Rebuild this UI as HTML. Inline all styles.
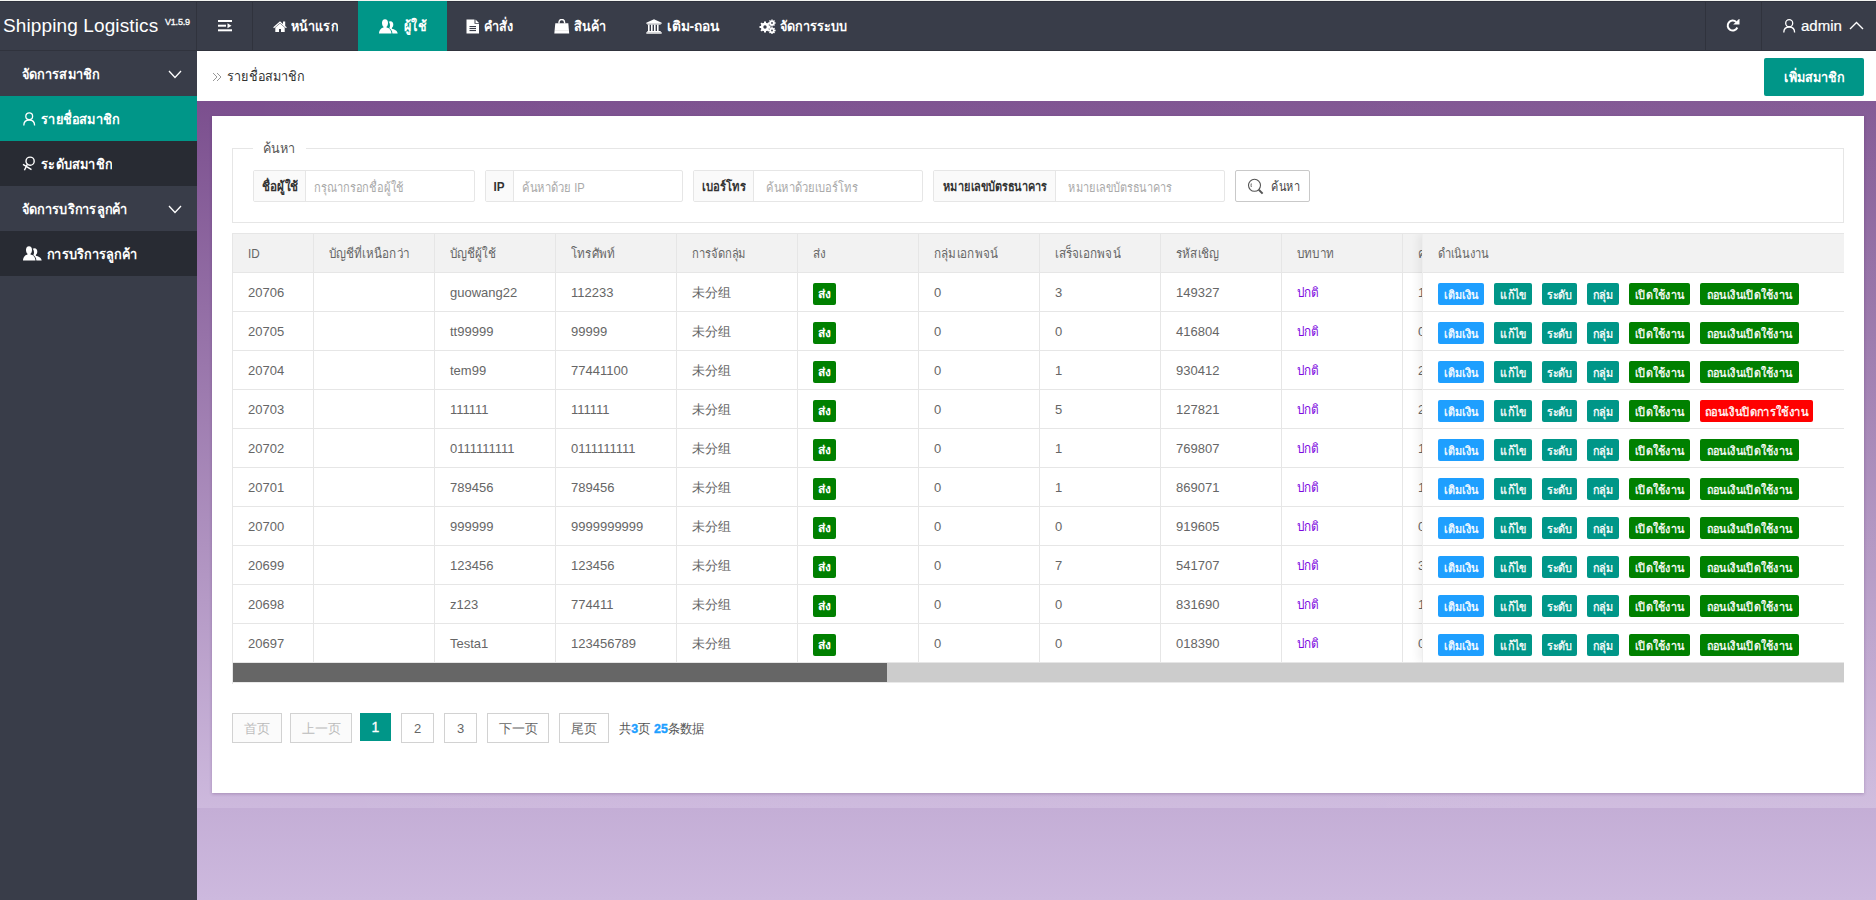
<!DOCTYPE html>
<html><head><meta charset="utf-8">
<style>
*{box-sizing:border-box;margin:0;padding:0}
html,body{width:1876px;height:900px;overflow:hidden}
body{font-family:"Liberation Sans",sans-serif;position:relative;background:#cbb7dc;color:#666}
.abs{position:absolute}
svg{display:block}
#topline{left:0;top:0;width:1876px;height:1px;background:#f4f5f2}
#header{left:0;top:1px;width:1876px;height:50px;background:#393D49;border-top:1px solid #2f323d;border-bottom:1px solid #30333d}
#logo{left:3px;top:15px;color:#fff;font-size:19px;line-height:22px;white-space:nowrap;letter-spacing:0.12px}
#logo sup{font-size:9px;font-weight:normal;-webkit-text-stroke:0.3px #fff;position:absolute;left:162px;top:1px;line-height:12px;letter-spacing:-0.2px}
.vsep{top:1px;width:1px;height:50px;background:#30333d}
.nav{top:1px;height:50px;color:#fff;font-weight:bold;font-size:14px;white-space:nowrap}
.nav.on{background:#009688}
.nav .ic{position:absolute}
.nav .tx{position:absolute;top:17px;line-height:16px;transform:scaleX(.9);transform-origin:0 50%}
#sidebar{left:0;top:51px;width:197px;height:849px;background:#393D49}
.sitem{position:absolute;left:0;width:197px;height:45px;color:#fff;font-size:14px;font-weight:bold;white-space:nowrap}
.sitem.child{background:#282B33}
.sitem.on{background:#009688}
.sitem .tx{position:absolute;top:15px;line-height:16px;transform:scaleX(.91);transform-origin:0 50%}
.sitem .ic{position:absolute}
#crumb{left:197px;top:51px;width:1679px;height:50px;background:#fff}
#crumbtx{left:227px;top:68px;font-size:14px;line-height:16px;color:#333;transform:scaleX(.9);transform-origin:0 50%}
#addbtn{left:1764px;top:58px;width:100px;height:38px;background:#009688;border-radius:2px;color:#fff;font-size:14px;font-weight:bold;display:flex;justify-content:center;line-height:38px;white-space:nowrap}
#purple{left:197px;top:101px;width:1679px;height:707px;background:linear-gradient(90deg,rgba(255,255,255,0),rgba(255,255,255,.07)),linear-gradient(180deg,#7b4f8e 0%,#cdb9dd 100%)}
#purple2{left:197px;top:808px;width:1679px;height:92px;background:linear-gradient(180deg,#c4aed6,#cdb9de)}
#card{left:212px;top:116px;width:1652px;height:677px;background:#fff;box-shadow:0 1px 3px rgba(60,20,80,.25)}
#fset{left:232px;top:148px;width:1612px;height:75px;border:1px solid #e6e6e6}
#legend{left:253px;top:139px;padding:0 7px 0 10px;background:#fff;font-size:14px;line-height:18px;color:#555}
.ig{top:170px;height:32px;border:1px solid #e6e6e6;border-radius:2px;background:#fff}
.ig .lb{position:absolute;left:0;top:0;height:30px;background:#fafafa;border-right:1px solid #e6e6e6;font-weight:bold;color:#333;font-size:13px;line-height:32px;display:flex;justify-content:center;white-space:nowrap}
.ig .ph{position:absolute;top:1px;line-height:32px;font-size:13px;color:#aaa;white-space:nowrap}
#sbtn{left:1235px;top:170px;width:75px;height:32px;border:1px solid #c9c9c9;border-radius:2px;background:#fff}
#tbl{left:232px;top:233px;width:1612px;height:451px;border:1px solid #e6e6e6;border-right:none;border-bottom:none;overflow:hidden}
.thead{left:0;top:0;width:1612px;height:39px;background:#f2f2f2}
.hl{left:0;width:1612px;height:1px;background:#e6e6e6}
.vl{top:0;width:1px;height:428px;background:#e6e6e6}
.th{top:10px;line-height:20px;font-size:13px;color:#666;white-space:nowrap}
.td{line-height:38px;font-size:13px;color:#666;white-space:nowrap}
.badge{display:inline-flex;justify-content:center;width:23px;background:#008000;color:#fff;font-weight:bold;font-size:12px;height:22px;line-height:23px;border-radius:2px;vertical-align:middle}
.role{color:#7d0ae0}
#fixr{left:1189px;top:0;width:422px;height:428px;background:#fff;box-shadow:-4px 0 8px rgba(0,0,0,.06);border-left:1px solid #eee}
.fhead{left:0;top:0;width:421px;height:39px;background:#f2f2f2}
.fhl{left:0;width:421px;height:1px;background:#e6e6e6}
.brow{left:0;width:421px;height:22px}
.b{position:absolute;top:0;height:22px;line-height:24px;-webkit-text-stroke:0.3px #fff;border-radius:2px;color:#fff;font-size:12px;display:flex;justify-content:center;white-space:nowrap}
.bblue{background:#1E9FFF}
.bteal{background:#009688}
.bgreen{background:#008000}
.bred{background:#FF0000}
#sbar{left:0;top:429px;width:1612px;height:19px;background:#cccccc;box-shadow:0 1px 0 #e9e9e9}
#sthumb{left:0;top:0;width:654px;height:19px;background:#666}
.pg{top:713px;height:30px;border:1px solid #d2d2d2;background:#fff;color:#666;font-size:13px;line-height:30px;text-align:center}
.pg.dis{color:#bbb;background:#fbfbfb}
.pg.on{background:#009688;border-color:#009688;color:#fff;height:28px;line-height:26px;font-size:14px;-webkit-text-stroke:0.3px #fff}
#pgtx{left:619px;top:720px;font-size:13px;line-height:18px;color:#555;white-space:nowrap;transform:scaleX(.95);transform-origin:0 50%}
#pgtx b{color:#1E9FFF;-webkit-text-stroke:0.4px #1E9FFF}

.t{display:inline-block;transform:scaleX(.9);transform-origin:0 50%}
.tc{display:inline-block;transform:scaleX(.9);transform-origin:50% 50%}

</style></head><body>
<div id="topline" class="abs"></div>
<div id="header" class="abs"></div>
<div id="logo" class="abs">Shipping Logistics<sup>V1.5.9</sup></div>
<div class="vsep abs" style="left:196px"></div>
<div class="vsep abs" style="left:252px"></div>
<div class="vsep abs" style="left:1705px"></div>
<div class="vsep abs" style="left:1761px"></div>
<svg class="abs" style="left:218px;top:19px" width="15" height="14" viewBox="0 0 15 14">
<rect x="0" y="1" width="14" height="2" fill="#fff"/>
<rect x="0" y="5.7" width="8" height="2" fill="#fff"/>
<path d="M9.5 4.2 L13.5 6.7 L9.5 9.2Z" fill="#fff"/>
<rect x="0" y="10.3" width="14" height="2" fill="#fff"/>
</svg>
<!-- nav items -->
<div class="nav abs" style="left:253px;width:105px">
 <svg class="ic" style="left:20px;top:20px" width="14" height="12" viewBox="0 0 14 12"><path d="M0.2 6.3 L7 0.3 L10 3 V0.5 H12.2 V4.9 L13.8 6.3 L13 7.2 L7 1.9 L1 7.2Z" fill="#fff"/><path d="M2.3 6.6 L7 2.6 L11.7 6.6 V11 H8 V8 H6 V11 H2.3Z" fill="#fff"/></svg>
 <span class="tx" style="left:38px">หน้าแรก</span>
</div>
<div class="nav on abs" style="left:358px;width:89px">
 <svg class="ic" style="left:21px;top:18px" width="19" height="15" viewBox="0 0 19 15"><path d="M6 0.3 C8 0.3 9 2 9 4 C9 6 8.2 7.2 7.5 7.8 V8.6 C10 9.2 12.2 10.5 12.5 14.5 H0 C0.3 10.5 2.5 9.2 4.5 8.6 V7.8 C3.8 7.2 3 6 3 4 C3 2 4 0.3 6 0.3Z" fill="#fff"/><path d="M11.5 2.3 C13.3 2.3 14.3 3.8 14.3 5.6 C14.3 7.4 13.5 8.4 12.9 9 V9.7 C15.3 10.2 18.3 11.3 18.7 14.5 H13.4 C13.2 11.8 12 10.1 10.2 9.3 C10.8 8.5 11 7.5 11 6.5 C11 5 10.4 3.4 9.6 2.8 C10.1 2.5 10.8 2.3 11.5 2.3Z" fill="#fff"/></svg>
 <span class="tx" style="left:46px">ผู้ใช้</span>
</div>
<div class="nav abs" style="left:447px;width:87px">
 <svg class="ic" style="left:19px;top:18px" width="14" height="15" viewBox="0 0 14 15"><path d="M0.5 0.5 H8.5 V4.8 H13 V14.5 H0.5Z" fill="#fff"/><path d="M9.5 0.6 L13 4 H9.5Z" fill="#fff"/><rect x="3.5" y="7" width="6.5" height="1.1" fill="#393D49"/><rect x="3.5" y="9" width="6.5" height="1.1" fill="#393D49"/><rect x="3.5" y="11" width="6.5" height="1.1" fill="#393D49"/></svg>
 <span class="tx" style="left:37px">คำสั่ง</span>
</div>
<div class="nav abs" style="left:534px;width:92px">
 <svg class="ic" style="left:20px;top:18px" width="16" height="15" viewBox="0 0 16 15"><path d="M5 4.5 V3.5 C5 1.6 6.2 0.5 7.8 0.5 C9.4 0.5 10.6 1.6 10.6 3.5 V4.5" stroke="#fff" stroke-width="1.4" fill="none"/><path d="M1.3 4.3 H14.3 L15.2 14.5 H0.3Z" fill="#fff"/><rect x="1" y="11" width="14" height="0.5" fill="#ddd"/></svg>
 <span class="tx" style="left:40px">สินค้า</span>
</div>
<div class="nav abs" style="left:626px;width:114px">
 <svg class="ic" style="left:20px;top:18px" width="16" height="15" viewBox="0 0 16 15"><path d="M0.3 3.8 L8 0.3 L15.7 3.8 V4.8 H0.3Z" fill="#fff"/><rect x="1.3" y="4.8" width="13.4" height="0.8" fill="#fff"/><rect x="2" y="5.6" width="1.6" height="6.4" fill="#fff"/><rect x="5" y="5.6" width="1.6" height="6.4" fill="#fff"/><rect x="8" y="5.6" width="1.6" height="6.4" fill="#fff"/><rect x="11" y="5.6" width="1.6" height="6.4" fill="#fff"/><rect x="1.3" y="12" width="13.4" height="1" fill="#fff"/><rect x="0.3" y="13.2" width="15.4" height="1.5" fill="#fff"/></svg>
 <span class="tx" style="left:41px;transform:scaleX(.98)">เติม-ถอน</span>
</div>
<div class="nav abs" style="left:740px;width:127px">
 <svg class="ic" style="left:19px;top:18px" width="17" height="15" viewBox="0 0 17 15"><g fill="#fff"><circle cx="6" cy="8" r="4.2"/><g stroke="#fff" stroke-width="2"><path d="M6 2.5 V13.5 M0.5 8 H11.5 M2.1 4.1 L9.9 11.9 M2.1 11.9 L9.9 4.1"/></g><circle cx="13" cy="4" r="2.6"/><g stroke="#fff" stroke-width="1.4"><path d="M13 0.4 V7.6 M9.4 4 H16.6 M10.5 1.5 L15.5 6.5 M10.5 6.5 L15.5 1.5"/></g><circle cx="13" cy="11.5" r="2.6"/><g stroke="#fff" stroke-width="1.4"><path d="M13 7.9 V15 M9.4 11.5 H16.6 M10.5 9 L15.5 14 M10.5 14 L15.5 9"/></g></g><circle cx="6" cy="8" r="1.7" fill="#393D49"/><circle cx="13" cy="4" r="0.9" fill="#393D49"/><circle cx="13" cy="11.5" r="0.9" fill="#393D49"/></svg>
 <span class="tx" style="left:40px">จัดการระบบ</span>
</div>
<!-- right -->
<svg class="abs" style="left:1726px;top:19px" width="14" height="14" viewBox="0 0 14 14"><path d="M11.3 8.5 A5 5 0 1 1 10.2 3" stroke="#fff" stroke-width="2" fill="none"/><path d="M7.2 5.5 L13.5 5.5 L13.5 -0.5Z" fill="#fff"/></svg>
<svg class="abs" style="left:1783px;top:19px" width="13" height="14" viewBox="0 0 13 14"><circle cx="6.2" cy="4.2" r="3.5" stroke="#fff" stroke-width="1.3" fill="none"/><path d="M0.8 13.5 C0.8 10 3 8 6.2 8 C9.4 8 11.6 10 11.6 13.5" stroke="#fff" stroke-width="1.3" fill="none"/></svg>
<div class="abs" style="left:1801px;top:17px;color:#fff;font-size:15px;line-height:18px;-webkit-text-stroke:0.2px #fff">admin</div>
<svg class="abs" style="left:1849px;top:21px" width="15" height="9" viewBox="0 0 15 9"><path d="M1 8 L7.5 1.5 L14 8" stroke="#fff" stroke-width="1.4" fill="none"/></svg>
<!-- sidebar -->
<div id="sidebar" class="abs"></div>
<div class="sitem abs" style="top:51px"><span class="tx" style="left:22px">จัดการสมาชิก</span>
 <svg class="ic" style="left:168px;top:19px" width="14" height="9" viewBox="0 0 14 9"><path d="M1 1 L7 7.5 L13 1" stroke="#fff" stroke-width="1.3" fill="none"/></svg></div>
<div class="sitem on abs" style="top:96px">
 <svg class="ic" style="left:23px;top:16px" width="13" height="14" viewBox="0 0 13 14"><circle cx="6.2" cy="4.2" r="3.4" stroke="#fff" stroke-width="1.3" fill="none"/><path d="M0.8 13.5 C0.8 10 3 8 6.2 8 C9.4 8 11.6 10 11.6 13.5" stroke="#fff" stroke-width="1.3" fill="none"/></svg>
 <span class="tx" style="left:41px">รายชื่อสมาชิก</span></div>
<div class="sitem child abs" style="top:141px">
 <svg class="ic" style="left:22px;top:15px" width="15" height="15" viewBox="0 0 15 15"><circle cx="8.1" cy="5.2" r="4.1" stroke="#fff" stroke-width="1.4" fill="none"/><path d="M5.3 8.4 L2.4 14.2 M1 8.3 L9.5 13.6" stroke="#fff" stroke-width="1.4" fill="none"/></svg>
 <span class="tx" style="left:41px">ระดับสมาชิก</span></div>
<div class="sitem abs" style="top:186px"><span class="tx" style="left:22px">จัดการบริการลูกค้า</span>
 <svg class="ic" style="left:168px;top:19px" width="14" height="9" viewBox="0 0 14 9"><path d="M1 1 L7 7.5 L13 1" stroke="#fff" stroke-width="1.3" fill="none"/></svg></div>
<div class="sitem child abs" style="top:231px">
 <svg class="ic" style="left:23px;top:15px" width="19" height="15" viewBox="0 0 19 15"><path d="M6 0.3 C8 0.3 9 2 9 4 C9 6 8.2 7.2 7.5 7.8 V8.6 C10 9.2 12.2 10.5 12.5 14.5 H0 C0.3 10.5 2.5 9.2 4.5 8.6 V7.8 C3.8 7.2 3 6 3 4 C3 2 4 0.3 6 0.3Z" fill="#fff"/><path d="M11.5 2.3 C13.3 2.3 14.3 3.8 14.3 5.6 C14.3 7.4 13.5 8.4 12.9 9 V9.7 C15.3 10.2 18.3 11.3 18.7 14.5 H13.4 C13.2 11.8 12 10.1 10.2 9.3 C10.8 8.5 11 7.5 11 6.5 C11 5 10.4 3.4 9.6 2.8 C10.1 2.5 10.8 2.3 11.5 2.3Z" fill="#fff"/></svg>
 <span class="tx" style="left:47px">การบริการลูกค้า</span></div>
<!-- content -->
<div id="crumb" class="abs"></div>
<svg class="abs" style="left:212px;top:72px" width="10" height="10" viewBox="0 0 10 10"><path d="M1 1 L5 5 L1 9 M5 1 L9 5 L5 9" stroke="#999" stroke-width="1" fill="none"/></svg>
<div id="crumbtx" class="abs">รายชื่อสมาชิก</div>
<div id="addbtn" class="abs"><span class="tc">เพิ่มสมาชิก</span></div>
<div id="purple" class="abs"></div>
<div id="purple2" class="abs"></div>
<div id="card" class="abs"></div>
<div id="fset" class="abs"></div>
<div id="legend" class="abs"><span class="t">ค้นหา</span></div>
<div class="ig abs" style="left:253px;width:222px"><span class="lb" style="width:52px"><span class="tc">ชื่อผู้ใช้</span></span><span class="ph" style="left:60px"><span class="t" style="transform:scaleX(.85)">กรุณากรอกชื่อผู้ใช้</span></span></div>
<div class="ig abs" style="left:485px;width:198px"><span class="lb" style="width:28px"><span class="tc">IP</span></span><span class="ph" style="left:36px"><span class="t" style="transform:scaleX(.86)">ค้นหาด้วย IP</span></span></div>
<div class="ig abs" style="left:693px;width:230px"><span class="lb" style="width:60px"><span class="tc" style="transform:scaleX(.87)">เบอร์โทร</span></span><span class="ph" style="left:72px"><span class="t" style="transform:scaleX(.86)">ค้นหาด้วยเบอร์โทร</span></span></div>
<div class="ig abs" style="left:933px;width:292px"><span class="lb" style="width:122px"><span class="tc" style="transform:scaleX(.84)">หมายเลขบัตรธนาคาร</span></span><span class="ph" style="left:134px"><span class="t" style="transform:scaleX(.84)">หมายเลขบัตรธนาคาร</span></span></div>
<div id="sbtn" class="abs">
 <svg class="abs" style="left:11px;top:7px" width="18" height="18" viewBox="0 0 18 18"><circle cx="7.5" cy="7.3" r="6" stroke="#555" stroke-width="1.1" fill="none"/><path d="M4.3 5.5 Q3.8 7.3 4.3 9" stroke="#555" stroke-width="0.9" fill="none"/><path d="M11.8 11.8 L15.6 15.6" stroke="#555" stroke-width="2" fill="none"/></svg>
 <span class="abs" style="left:35px;top:8px;font-size:13px;line-height:16px;color:#444"><span class="t" style="transform:scaleX(.84)">ค้นหา</span></span>
</div>
<!-- pagination -->
<div class="pg dis abs" style="left:232px;width:50px"><span class="cjk">首页</span></div>
<div class="pg dis abs" style="left:290px;width:62px">上一页</div>
<div class="pg on abs" style="left:360px;width:31px">1</div>
<div class="pg abs" style="left:401px;width:33px">2</div>
<div class="pg abs" style="left:444px;width:33px">3</div>
<div class="pg abs" style="left:487px;width:62px">下一页</div>
<div class="pg abs" style="left:559px;width:50px">尾页</div>
<div id="pgtx" class="abs">共<b>3</b>页 <b>25</b>条数据</div>
<div id="tbl" class="abs">
<div class="thead abs"></div>
<div class="hl abs" style="top:38px"></div>
<div class="hl abs" style="top:77px"></div>
<div class="hl abs" style="top:116px"></div>
<div class="hl abs" style="top:155px"></div>
<div class="hl abs" style="top:194px"></div>
<div class="hl abs" style="top:233px"></div>
<div class="hl abs" style="top:272px"></div>
<div class="hl abs" style="top:311px"></div>
<div class="hl abs" style="top:350px"></div>
<div class="hl abs" style="top:389px"></div>
<div class="hl abs" style="top:428px"></div>
<div class="vl abs" style="left:80px"></div>
<div class="vl abs" style="left:201px"></div>
<div class="vl abs" style="left:322px"></div>
<div class="vl abs" style="left:443px"></div>
<div class="vl abs" style="left:564px"></div>
<div class="vl abs" style="left:685px"></div>
<div class="vl abs" style="left:806px"></div>
<div class="vl abs" style="left:927px"></div>
<div class="vl abs" style="left:1048px"></div>
<div class="vl abs" style="left:1169px"></div>
<div class="th abs" style="left:15px"><span class="t">ID</span></div>
<div class="th abs" style="left:96px"><span class="t">บัญชีที่เหนือกว่า</span></div>
<div class="th abs" style="left:217px"><span class="t">บัญชีผู้ใช้</span></div>
<div class="th abs" style="left:338px"><span class="t">โทรศัพท์</span></div>
<div class="th abs" style="left:459px"><span class="t" style="transform:scaleX(.86)">การจัดกลุ่ม</span></div>
<div class="th abs" style="left:580px"><span class="t">ส่ง</span></div>
<div class="th abs" style="left:701px"><span class="t">กลุ่มเอกพจน์</span></div>
<div class="th abs" style="left:822px"><span class="t">เสร็จเอกพจน์</span></div>
<div class="th abs" style="left:943px"><span class="t">รหัสเชิญ</span></div>
<div class="th abs" style="left:1064px"><span class="t">บทบาท</span></div>
<div class="th abs" style="left:1185px"><span class="t">คะแนน</span></div>
<div class="td abs" style="left:15px;top:40px">20706</div>
<div class="td abs" style="left:217px;top:40px">guowang22</div>
<div class="td abs" style="left:338px;top:40px">112233</div>
<div class="td abs" style="left:459px;top:40px"><span class="cjk">未分组</span></div>
<div class="td tdb abs" style="left:580px;top:40px"><span class="badge">ส่ง</span></div>
<div class="td abs" style="left:701px;top:40px">0</div>
<div class="td abs" style="left:822px;top:40px">3</div>
<div class="td abs" style="left:943px;top:40px">149327</div>
<div class="td abs" style="left:1064px;top:40px"><span class="role t">ปกติ</span></div>
<div class="td abs" style="left:1185px;top:40px">1</div>
<div class="td abs" style="left:15px;top:79px">20705</div>
<div class="td abs" style="left:217px;top:79px">tt99999</div>
<div class="td abs" style="left:338px;top:79px">99999</div>
<div class="td abs" style="left:459px;top:79px"><span class="cjk">未分组</span></div>
<div class="td tdb abs" style="left:580px;top:79px"><span class="badge">ส่ง</span></div>
<div class="td abs" style="left:701px;top:79px">0</div>
<div class="td abs" style="left:822px;top:79px">0</div>
<div class="td abs" style="left:943px;top:79px">416804</div>
<div class="td abs" style="left:1064px;top:79px"><span class="role t">ปกติ</span></div>
<div class="td abs" style="left:1185px;top:79px">0</div>
<div class="td abs" style="left:15px;top:118px">20704</div>
<div class="td abs" style="left:217px;top:118px">tem99</div>
<div class="td abs" style="left:338px;top:118px">77441100</div>
<div class="td abs" style="left:459px;top:118px"><span class="cjk">未分组</span></div>
<div class="td tdb abs" style="left:580px;top:118px"><span class="badge">ส่ง</span></div>
<div class="td abs" style="left:701px;top:118px">0</div>
<div class="td abs" style="left:822px;top:118px">1</div>
<div class="td abs" style="left:943px;top:118px">930412</div>
<div class="td abs" style="left:1064px;top:118px"><span class="role t">ปกติ</span></div>
<div class="td abs" style="left:1185px;top:118px">2</div>
<div class="td abs" style="left:15px;top:157px">20703</div>
<div class="td abs" style="left:217px;top:157px">111111</div>
<div class="td abs" style="left:338px;top:157px">111111</div>
<div class="td abs" style="left:459px;top:157px"><span class="cjk">未分组</span></div>
<div class="td tdb abs" style="left:580px;top:157px"><span class="badge">ส่ง</span></div>
<div class="td abs" style="left:701px;top:157px">0</div>
<div class="td abs" style="left:822px;top:157px">5</div>
<div class="td abs" style="left:943px;top:157px">127821</div>
<div class="td abs" style="left:1064px;top:157px"><span class="role t">ปกติ</span></div>
<div class="td abs" style="left:1185px;top:157px">2</div>
<div class="td abs" style="left:15px;top:196px">20702</div>
<div class="td abs" style="left:217px;top:196px">0111111111</div>
<div class="td abs" style="left:338px;top:196px">0111111111</div>
<div class="td abs" style="left:459px;top:196px"><span class="cjk">未分组</span></div>
<div class="td tdb abs" style="left:580px;top:196px"><span class="badge">ส่ง</span></div>
<div class="td abs" style="left:701px;top:196px">0</div>
<div class="td abs" style="left:822px;top:196px">1</div>
<div class="td abs" style="left:943px;top:196px">769807</div>
<div class="td abs" style="left:1064px;top:196px"><span class="role t">ปกติ</span></div>
<div class="td abs" style="left:1185px;top:196px">1</div>
<div class="td abs" style="left:15px;top:235px">20701</div>
<div class="td abs" style="left:217px;top:235px">789456</div>
<div class="td abs" style="left:338px;top:235px">789456</div>
<div class="td abs" style="left:459px;top:235px"><span class="cjk">未分组</span></div>
<div class="td tdb abs" style="left:580px;top:235px"><span class="badge">ส่ง</span></div>
<div class="td abs" style="left:701px;top:235px">0</div>
<div class="td abs" style="left:822px;top:235px">1</div>
<div class="td abs" style="left:943px;top:235px">869071</div>
<div class="td abs" style="left:1064px;top:235px"><span class="role t">ปกติ</span></div>
<div class="td abs" style="left:1185px;top:235px">1</div>
<div class="td abs" style="left:15px;top:274px">20700</div>
<div class="td abs" style="left:217px;top:274px">999999</div>
<div class="td abs" style="left:338px;top:274px">9999999999</div>
<div class="td abs" style="left:459px;top:274px"><span class="cjk">未分组</span></div>
<div class="td tdb abs" style="left:580px;top:274px"><span class="badge">ส่ง</span></div>
<div class="td abs" style="left:701px;top:274px">0</div>
<div class="td abs" style="left:822px;top:274px">0</div>
<div class="td abs" style="left:943px;top:274px">919605</div>
<div class="td abs" style="left:1064px;top:274px"><span class="role t">ปกติ</span></div>
<div class="td abs" style="left:1185px;top:274px">0</div>
<div class="td abs" style="left:15px;top:313px">20699</div>
<div class="td abs" style="left:217px;top:313px">123456</div>
<div class="td abs" style="left:338px;top:313px">123456</div>
<div class="td abs" style="left:459px;top:313px"><span class="cjk">未分组</span></div>
<div class="td tdb abs" style="left:580px;top:313px"><span class="badge">ส่ง</span></div>
<div class="td abs" style="left:701px;top:313px">0</div>
<div class="td abs" style="left:822px;top:313px">7</div>
<div class="td abs" style="left:943px;top:313px">541707</div>
<div class="td abs" style="left:1064px;top:313px"><span class="role t">ปกติ</span></div>
<div class="td abs" style="left:1185px;top:313px">3</div>
<div class="td abs" style="left:15px;top:352px">20698</div>
<div class="td abs" style="left:217px;top:352px">z123</div>
<div class="td abs" style="left:338px;top:352px">774411</div>
<div class="td abs" style="left:459px;top:352px"><span class="cjk">未分组</span></div>
<div class="td tdb abs" style="left:580px;top:352px"><span class="badge">ส่ง</span></div>
<div class="td abs" style="left:701px;top:352px">0</div>
<div class="td abs" style="left:822px;top:352px">0</div>
<div class="td abs" style="left:943px;top:352px">831690</div>
<div class="td abs" style="left:1064px;top:352px"><span class="role t">ปกติ</span></div>
<div class="td abs" style="left:1185px;top:352px">1</div>
<div class="td abs" style="left:15px;top:391px">20697</div>
<div class="td abs" style="left:217px;top:391px">Testa1</div>
<div class="td abs" style="left:338px;top:391px">123456789</div>
<div class="td abs" style="left:459px;top:391px"><span class="cjk">未分组</span></div>
<div class="td tdb abs" style="left:580px;top:391px"><span class="badge">ส่ง</span></div>
<div class="td abs" style="left:701px;top:391px">0</div>
<div class="td abs" style="left:822px;top:391px">0</div>
<div class="td abs" style="left:943px;top:391px">018390</div>
<div class="td abs" style="left:1064px;top:391px"><span class="role t">ปกติ</span></div>
<div class="td abs" style="left:1185px;top:391px">0</div>
<div id="fixr" class="abs">
<div class="fhead abs"></div>
<div class="fhl abs" style="top:38px"></div>
<div class="fhl abs" style="top:77px"></div>
<div class="fhl abs" style="top:116px"></div>
<div class="fhl abs" style="top:155px"></div>
<div class="fhl abs" style="top:194px"></div>
<div class="fhl abs" style="top:233px"></div>
<div class="fhl abs" style="top:272px"></div>
<div class="fhl abs" style="top:311px"></div>
<div class="fhl abs" style="top:350px"></div>
<div class="fhl abs" style="top:389px"></div>
<div class="fhl abs" style="top:428px"></div>
<div class="th abs" style="left:15px"><span class="t" style="transform:scaleX(.86)">ดำเนินงาน</span></div>
<div class="brow abs" style="top:49px"><span class="b bblue" style="left:15px;width:46px"><span class="tc">เติมเงิน</span></span><span class="b bteal" style="left:71px;width:38px"><span class="tc">แก้ไข</span></span><span class="b bteal" style="left:119px;width:35px"><span class="tc">ระดับ</span></span><span class="b bteal" style="left:164px;width:32px"><span class="tc">กลุ่ม</span></span><span class="b bgreen" style="left:206px;width:61px"><span class="tc">เปิดใช้งาน</span></span><span class="b bgreen" style="left:277px;width:99px"><span class="tc">ถอนเงินเปิดใช้งาน</span></span></div>
<div class="brow abs" style="top:88px"><span class="b bblue" style="left:15px;width:46px"><span class="tc">เติมเงิน</span></span><span class="b bteal" style="left:71px;width:38px"><span class="tc">แก้ไข</span></span><span class="b bteal" style="left:119px;width:35px"><span class="tc">ระดับ</span></span><span class="b bteal" style="left:164px;width:32px"><span class="tc">กลุ่ม</span></span><span class="b bgreen" style="left:206px;width:61px"><span class="tc">เปิดใช้งาน</span></span><span class="b bgreen" style="left:277px;width:99px"><span class="tc">ถอนเงินเปิดใช้งาน</span></span></div>
<div class="brow abs" style="top:127px"><span class="b bblue" style="left:15px;width:46px"><span class="tc">เติมเงิน</span></span><span class="b bteal" style="left:71px;width:38px"><span class="tc">แก้ไข</span></span><span class="b bteal" style="left:119px;width:35px"><span class="tc">ระดับ</span></span><span class="b bteal" style="left:164px;width:32px"><span class="tc">กลุ่ม</span></span><span class="b bgreen" style="left:206px;width:61px"><span class="tc">เปิดใช้งาน</span></span><span class="b bgreen" style="left:277px;width:99px"><span class="tc">ถอนเงินเปิดใช้งาน</span></span></div>
<div class="brow abs" style="top:166px"><span class="b bblue" style="left:15px;width:46px"><span class="tc">เติมเงิน</span></span><span class="b bteal" style="left:71px;width:38px"><span class="tc">แก้ไข</span></span><span class="b bteal" style="left:119px;width:35px"><span class="tc">ระดับ</span></span><span class="b bteal" style="left:164px;width:32px"><span class="tc">กลุ่ม</span></span><span class="b bgreen" style="left:206px;width:61px"><span class="tc">เปิดใช้งาน</span></span><span class="b bred" style="left:277px;width:113px"><span class="tc" style="transform:scaleX(.93)">ถอนเงินปิดการใช้งาน</span></span></div>
<div class="brow abs" style="top:205px"><span class="b bblue" style="left:15px;width:46px"><span class="tc">เติมเงิน</span></span><span class="b bteal" style="left:71px;width:38px"><span class="tc">แก้ไข</span></span><span class="b bteal" style="left:119px;width:35px"><span class="tc">ระดับ</span></span><span class="b bteal" style="left:164px;width:32px"><span class="tc">กลุ่ม</span></span><span class="b bgreen" style="left:206px;width:61px"><span class="tc">เปิดใช้งาน</span></span><span class="b bgreen" style="left:277px;width:99px"><span class="tc">ถอนเงินเปิดใช้งาน</span></span></div>
<div class="brow abs" style="top:244px"><span class="b bblue" style="left:15px;width:46px"><span class="tc">เติมเงิน</span></span><span class="b bteal" style="left:71px;width:38px"><span class="tc">แก้ไข</span></span><span class="b bteal" style="left:119px;width:35px"><span class="tc">ระดับ</span></span><span class="b bteal" style="left:164px;width:32px"><span class="tc">กลุ่ม</span></span><span class="b bgreen" style="left:206px;width:61px"><span class="tc">เปิดใช้งาน</span></span><span class="b bgreen" style="left:277px;width:99px"><span class="tc">ถอนเงินเปิดใช้งาน</span></span></div>
<div class="brow abs" style="top:283px"><span class="b bblue" style="left:15px;width:46px"><span class="tc">เติมเงิน</span></span><span class="b bteal" style="left:71px;width:38px"><span class="tc">แก้ไข</span></span><span class="b bteal" style="left:119px;width:35px"><span class="tc">ระดับ</span></span><span class="b bteal" style="left:164px;width:32px"><span class="tc">กลุ่ม</span></span><span class="b bgreen" style="left:206px;width:61px"><span class="tc">เปิดใช้งาน</span></span><span class="b bgreen" style="left:277px;width:99px"><span class="tc">ถอนเงินเปิดใช้งาน</span></span></div>
<div class="brow abs" style="top:322px"><span class="b bblue" style="left:15px;width:46px"><span class="tc">เติมเงิน</span></span><span class="b bteal" style="left:71px;width:38px"><span class="tc">แก้ไข</span></span><span class="b bteal" style="left:119px;width:35px"><span class="tc">ระดับ</span></span><span class="b bteal" style="left:164px;width:32px"><span class="tc">กลุ่ม</span></span><span class="b bgreen" style="left:206px;width:61px"><span class="tc">เปิดใช้งาน</span></span><span class="b bgreen" style="left:277px;width:99px"><span class="tc">ถอนเงินเปิดใช้งาน</span></span></div>
<div class="brow abs" style="top:361px"><span class="b bblue" style="left:15px;width:46px"><span class="tc">เติมเงิน</span></span><span class="b bteal" style="left:71px;width:38px"><span class="tc">แก้ไข</span></span><span class="b bteal" style="left:119px;width:35px"><span class="tc">ระดับ</span></span><span class="b bteal" style="left:164px;width:32px"><span class="tc">กลุ่ม</span></span><span class="b bgreen" style="left:206px;width:61px"><span class="tc">เปิดใช้งาน</span></span><span class="b bgreen" style="left:277px;width:99px"><span class="tc">ถอนเงินเปิดใช้งาน</span></span></div>
<div class="brow abs" style="top:400px"><span class="b bblue" style="left:15px;width:46px"><span class="tc">เติมเงิน</span></span><span class="b bteal" style="left:71px;width:38px"><span class="tc">แก้ไข</span></span><span class="b bteal" style="left:119px;width:35px"><span class="tc">ระดับ</span></span><span class="b bteal" style="left:164px;width:32px"><span class="tc">กลุ่ม</span></span><span class="b bgreen" style="left:206px;width:61px"><span class="tc">เปิดใช้งาน</span></span><span class="b bgreen" style="left:277px;width:99px"><span class="tc">ถอนเงินเปิดใช้งาน</span></span></div>
</div>
<div id="sbar" class="abs"><div id="sthumb" class="abs"></div></div>
</div>
</body></html>
